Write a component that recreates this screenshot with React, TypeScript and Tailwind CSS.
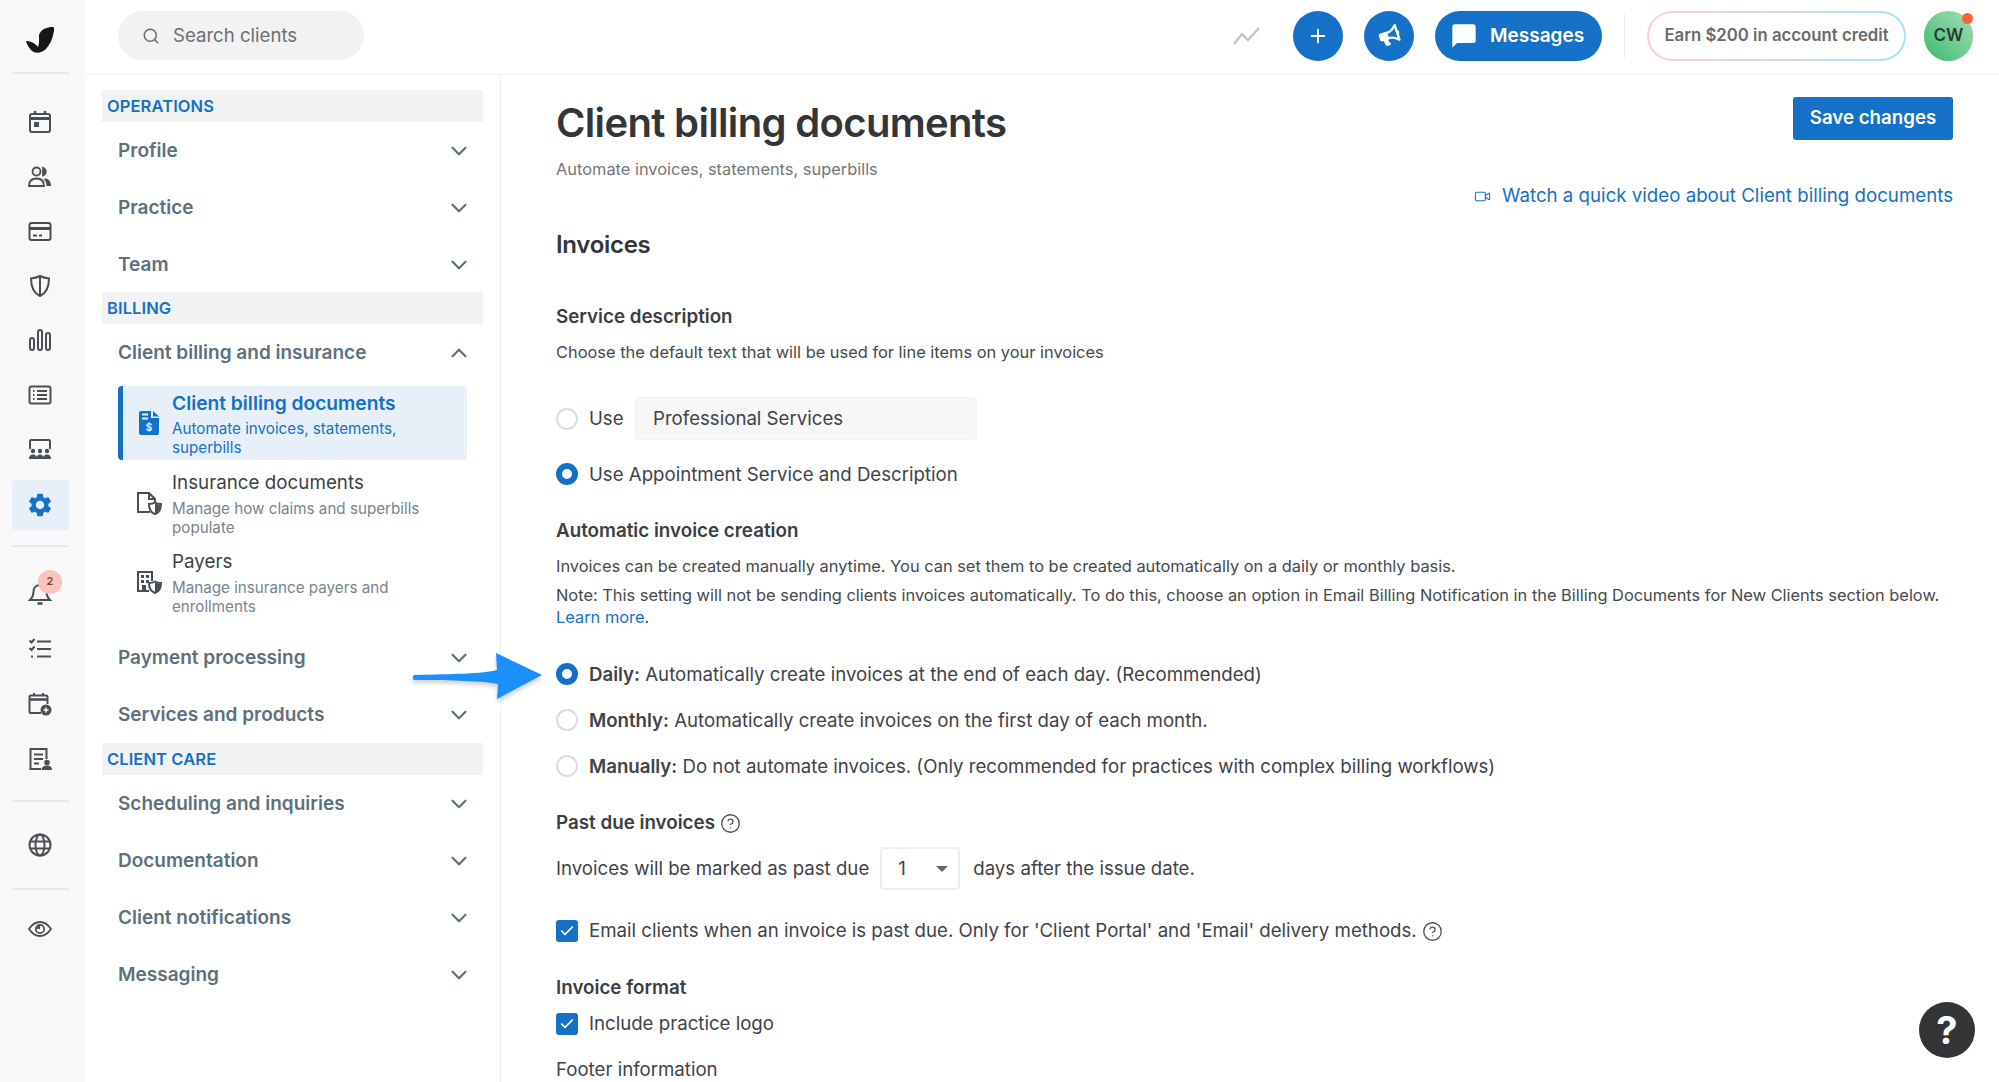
import React from 'react';
import { ChevronDown, ChevronUp, Search, Plus, Video, HelpCircle, Check } from 'lucide-react';
import { MdSettings, MdChatBubble } from 'react-icons/md';
import { FaBullhorn } from 'react-icons/fa';

const Gray = '#4a4f54';

// rail icons, all on a 24 box
const CalendarIcon = () => (
  <svg width="24" height="24" viewBox="0 0 24 24" fill="none" stroke={Gray} strokeWidth="2">
    <rect x="2" y="4" width="20" height="18" rx="2" />
    <path d="M2 8.500h20" strokeWidth="3" />
    <path d="M7 1v4M17 1v4" strokeWidth="2.400" />
    <rect x="6" y="12" width="5" height="5" fill={Gray} stroke="none" />
  </svg>
);
const PeopleIcon = () => (
  <svg width="24" height="24" viewBox="0 0 24 24" fill="none" stroke={Gray} strokeWidth="1.800">
    <circle cx="8.500" cy="6.500" r="4" />
    <path d="M1 21c0-5 3-7.500 7.500-7.500S16 16 16 21z" />
    <path d="M15 2.800a4 4 0 0 1 0 7.600z" fill={Gray} />
    <path d="M17.500 13.500c3.500.5 5.500 3 5.500 7.500h-4.500c0-3-1-5.500-3-7z" fill={Gray} stroke="none" />
  </svg>
);
const CardIcon = () => (
  <svg width="24" height="24" viewBox="0 0 24 24" fill="none" stroke={Gray} strokeWidth="2">
    <rect x="1.500" y="4" width="21" height="17" rx="2" />
    <path d="M1.500 9.500h21" strokeWidth="3" />
    <path d="M5 16.500h4M11 16.500h3" />
  </svg>
);
const ShieldIcon = () => (
  <svg width="24" height="24" viewBox="0 0 24 24" fill="none" stroke={Gray} strokeWidth="2">
    <path d="M12 2c3 1.500 6 2.200 9 2.400 0 9-2.500 14.500-9 17.600C5.500 18.900 3 13.400 3 4.400 6 4.200 9 3.500 12 2z" />
    <path d="M12 2v20" />
  </svg>
);
const BarsIcon = () => (
  <svg width="24" height="24" viewBox="0 0 24 24" fill="none" stroke={Gray} strokeWidth="2">
    <rect x="2" y="10" width="4" height="12" rx="2" />
    <rect x="10" y="2" width="4" height="20" rx="2" />
    <rect x="18" y="5" width="4" height="17" rx="2" />
  </svg>
);
const ListIcon = () => (
  <svg width="24" height="24" viewBox="0 0 24 24" fill="none" stroke={Gray} strokeWidth="2">
    <rect x="1.500" y="3.500" width="21" height="17" rx="2" />
    <path d="M9 8h10M9 12h10M9 16h10M5 8h1.500M5 12h1.500M5 16h1.500" />
  </svg>
);
const GroupIcon = () => (
  <svg width="24" height="24" viewBox="0 0 24 24" fill="none" stroke={Gray} strokeWidth="2">
    <path d="M2 12V4a1 1 0 0 1 1-1h18a1 1 0 0 1 1 1v8" />
    <g fill={Gray} stroke="none">
      <circle cx="5" cy="14" r="2.200" />
      <circle cx="12" cy="14" r="2.200" />
      <circle cx="19" cy="14" r="2.200" />
      <path d="M1 22c0-3 1.500-4.500 4-4.500S9 19 9 22zM8.500 22c0-3 1-4.500 3.500-4.500s3.500 1.500 3.500 4.500zM15 22c0-3 1.500-4.500 4-4.500s4 1.500 4 4.500z" />
    </g>
  </svg>
);
const BellIcon = () => (
  <svg width="24" height="24" viewBox="0 0 24 24" fill="none" stroke={Gray} strokeWidth="2">
    <path d="M12 3c-4 0-6.500 3-6.500 7 0 4-1.500 6-3.500 8h20c-2-2-3.500-4-3.500-8 0-4-2.500-7-6.500-7z" />
    <path d="M9.500 21.500h5" strokeWidth="2.600" />
  </svg>
);
const ChecklistIcon = () => (
  <svg width="24" height="24" viewBox="0 0 24 24" fill="none" stroke={Gray} strokeWidth="2">
    <path d="M9 4.500h14M9 12h14M9 19.500h14" />
    <path d="M1.500 3.500l2 2 3-3.500M1.500 11l2 2 3-3.500" />
    <path d="M3 19.500h2" />
  </svg>
);
const CalendarPlusIcon = () => (
  <svg width="24" height="24" viewBox="0 0 24 24" fill="none" stroke={Gray} strokeWidth="2">
    <path d="M13 21H3a1.500 1.500 0 0 1-1.500-1.500V5A1.500 1.500 0 0 1 3 3.500h15A1.500 1.500 0 0 1 19.500 5v7" />
    <path d="M1.500 7.500h18" strokeWidth="2.600" />
    <path d="M6 1v3M15 1v3" />
    <circle cx="18" cy="18" r="5.500" fill={Gray} stroke="none" />
    <path d="M18 15.500v5M15.500 18h5" stroke="#f8f8f8" strokeWidth="1.500" />
  </svg>
);
const FormIcon = () => (
  <svg width="24" height="24" viewBox="0 0 24 24" fill="none" stroke={Gray} strokeWidth="2">
    <path d="M13 22H2.500V2h16v10" />
    <path d="M6 7.500h9M6 12h9M6 16.500h5" />
    <circle cx="19" cy="15.500" r="2.800" fill={Gray} stroke="none" />
    <path d="M13.500 23c0-3 2-4.500 5.500-4.500s5 1.500 5 4.500z" fill={Gray} stroke="none" />
  </svg>
);
const GlobeIcon = () => (
  <svg width="24" height="24" viewBox="0 0 24 24" fill="none" stroke={Gray} strokeWidth="2">
    <circle cx="12" cy="12" r="10.500" />
    <ellipse cx="12" cy="12" rx="4.500" ry="10.500" />
    <path d="M2 8.500h20M2 15.500h20" />
  </svg>
);
const EyeIcon = () => (
  <svg width="24" height="24" viewBox="0 0 24 24" fill="none" stroke={Gray} strokeWidth="1.800">
    <path d="M1 12c3-4.500 6.500-7 11-7s8 2.500 11 7c-3 4.500-6.500 7-11 7s-8-2.500-11-7z" />
    <circle cx="12" cy="12" r="4.200" />
    <path d="M12 8.500a3.500 3.500 0 0 0-3.500 3.500H12z" fill={Gray} stroke="none" />
  </svg>
);

const Logo = () => (
  <svg width="28" height="26" viewBox="0 0 28 26" fill="#141618">
    <path d="M13 8C15 2 21 0 27 0c2 1 1 4 .5 6-1 6-3.500 12-8 16.500-4 3.500-10 4.500-14 1C3 21 1 18 0 14c4 0 9 2 12 6 1.500-4 1-8 1-12z" />
  </svg>
);

const TrendIcon = () => (
  <svg width="27" height="20" viewBox="0 0 27 20" fill="none" stroke="#c4c4c4" strokeWidth="2.500">
    <path d="M1 18L9 8l6 6L26 2" />
  </svg>
);

const BillingDocIcon = () => (
  <svg width="20" height="24" viewBox="0 0 20 24">
    <path d="M2 0h10v7h8v15a2 2 0 0 1-2 2H2a2 2 0 0 1-2-2V2a2 2 0 0 1 2-2z" fill="#1570c7" />
    <path d="M14 0l6 5.500h-6z" fill="#1570c7" />
    <path d="M3 3.500h6M3 7.500h6" stroke="#e6f0fa" strokeWidth="2" />
    <text x="10" y="20" textAnchor="middle" fontSize="10" fontWeight="700" fill="#e6f0fa" fontFamily="Inter, sans-serif">$</text>
  </svg>
);
const InsuranceDocIcon = () => (
  <svg width="26" height="24" viewBox="0 0 26 24" fill="none" stroke={Gray} strokeWidth="2">
    <path d="M14 21H2V2h11l6 6v3" />
    <path d="M13 2v6h6" />
    <path d="M19 11.500c1.500 1 3.500 1.500 6 1.500 0 5-1.500 8.500-6 10-4.500-1.500-6-5-6-10 2.500 0 4.500-.5 6-1.500z" fill="white" />
    <path d="M19 12c1.500 1 3.500 1.500 5.500 1.500 0 4-1.500 7.500-5.500 9z" fill={Gray} stroke="none" />
  </svg>
);
const PayersIcon = () => (
  <svg width="26" height="24" viewBox="0 0 26 24" fill="none" stroke={Gray} strokeWidth="2">
    <path d="M13 21H2V2h14v9" />
    <g fill={Gray} stroke="none">
      <rect x="5" y="5" width="3" height="3" />
      <rect x="10" y="5" width="3" height="3" />
      <rect x="5" y="10" width="3" height="3" />
      <rect x="10" y="10" width="3" height="3" />
      <rect x="6" y="15" width="4" height="6" />
    </g>
    <path d="M19 11.500c1.500 1 3.500 1.500 6 1.500 0 5-1.500 8.500-6 10-4.500-1.500-6-5-6-10 2.500 0 4.500-.5 6-1.500z" fill="white" />
    <path d="M19 12c1.500 1 3.500 1.500 5.500 1.500 0 4-1.500 7.500-5.500 9z" fill={Gray} stroke="none" />
  </svg>
);

const SectionHeader = ({ label }: { label: string }) => (
  <div className="h-8 bg-[#f1f2f4] pl-[5px] flex items-center text-[16.500px] font-semibold tracking-[0.1px] text-[#1570c7]">
    {label}
  </div>
);

const NavRow = ({ label, open }: { label: string; open?: boolean }) => (
  <div className="h-[57px] pl-4 pr-[11px] flex items-center justify-between text-[19px] font-semibold text-[#5d707d]">
    <span className="pt-[1px]">{label}</span>
    {open ? <ChevronUp size={26} strokeWidth={2} /> : <ChevronDown size={26} strokeWidth={2} />}
  </div>
);

const SubItem = ({ icon, title, lines, active }: { icon: React.ReactNode; title: string; lines: string[]; active?: boolean }) => (
  <div className={`ml-4 mr-4 flex items-center rounded-[4px] ${active ? 'h-[74px] bg-[#e7f0f9] border-l-[5px] border-[#1570c7]' : 'h-[78px] border-l-[5px] border-transparent'}`}>
    <div className="w-[49px] shrink-0 flex justify-center pl-[2px]">{icon}</div>
    <div className="pt-[1px]">
      <div className={`leading-[24px] ${active ? 'text-[19.200px] font-semibold text-[#1570c7]' : 'text-[18.800px] text-[#3c3f43]'}`}>{title}</div>
      <div className="mt-[4px]">
        {lines.map(l => (
          <div key={l} className={`text-[15.200px] leading-[19px] ${active ? 'text-[#1570c7]' : 'text-[#77858f]'}`}>{l}</div>
        ))}
      </div>
    </div>
  </div>
);

const Radio = ({ checked }: { checked?: boolean }) =>
  checked ? (
    <span className="w-[22px] h-[22px] shrink-0 rounded-full border-[6px] border-[#1570c7] bg-white" />
  ) : (
    <span className="w-[22px] h-[22px] shrink-0 rounded-full border-2 border-[#dcdcdc] bg-white" />
  );

const CheckBox = () => (
  <span className="w-[22px] h-[22px] shrink-0 rounded-[3px] bg-[#1570c7] flex items-center justify-center">
    <Check size={16} strokeWidth={2.500} color="white" />
  </span>
);

const Heading = ({ children, className }: { children: React.ReactNode; className: string }) => (
  <div className={`h-[26px] leading-[26px] text-[18.800px] font-semibold text-[#3b3e42] ${className}`}>{children}</div>
);

const OptionRow = ({ className, children }: { className: string; children: React.ReactNode }) => (
  <div className={`h-6 flex items-center gap-[11px] text-[18.650px] text-[#3f4347] ${className}`}>{children}</div>
);

const Help = () => <HelpCircle size={21} strokeWidth={1.500} color="#4a4f54" />;

export default function App() {
  return (
    <div className="relative flex h-[1082px] overflow-hidden bg-white [font-family:Inter,sans-serif]">
      {/* icon rail */}
      <aside className="w-[85px] shrink-0 bg-[#f8f8f8] flex flex-col items-center pr-[5px]">
        <div className="h-[72px] w-full flex items-center justify-center pt-[7px]"><Logo /></div>
        <div className="w-[57px] h-[2px] bg-[#e8e8e8]" />
        <div className="mt-[21px] flex flex-col items-center">
          {[CalendarIcon, PeopleIcon, CardIcon, ShieldIcon, BarsIcon, ListIcon, GroupIcon].map((Icon, i) => (
            <div key={i} className="h-[54.500px] flex items-center justify-center"><Icon /></div>
          ))}
        </div>
        <div className="mt-[3px] w-[57px] h-[50px] rounded-[4px] bg-[#e7f0f9] flex items-center justify-center">
          <MdSettings size={28} color="#1570c7" />
        </div>
        <div className="mt-[15px] w-[57px] h-[2px] bg-[#e8e8e8]" />
        <div className="mt-[20px] flex flex-col items-center">
          <div className="relative h-[55px] flex items-center justify-center">
            <BellIcon />
            <span className="absolute left-[10px] top-[3px] w-6 h-6 rounded-full bg-[#fbc3bb] text-[#8a3a30] text-[11px] font-semibold flex items-center justify-center">2</span>
          </div>
          {[ChecklistIcon, CalendarPlusIcon, FormIcon].map((Icon, i) => (
            <div key={i} className="h-[55px] flex items-center justify-center"><Icon /></div>
          ))}
        </div>
        <div className="mt-[13px] w-[57px] h-[2px] bg-[#e8e8e8]" />
        <div className="h-[86px] flex items-center"><GlobeIcon /></div>
        <div className="w-[57px] h-[2px] bg-[#e8e8e8]" />
        <div className="h-[78px] flex items-center"><EyeIcon /></div>
      </aside>

      <div className="flex-1 flex flex-col min-w-0">
        {/* top bar */}
        <header className="h-[75px] shrink-0 border-b border-[#efefef] flex items-center pl-[33px] pr-[26px] pb-[3px]">
          <div className="w-[246px] h-[49px] rounded-full bg-[#f2f2f2] flex items-center pl-[24px] gap-[13px] text-[18.600px] text-[#6e6e6e]">
            <Search size={18} color="#6e6e6e" />
            <span className="pt-[1px]">Search clients</span>
          </div>
          <div className="ml-auto flex items-center">
            <TrendIcon />
            <button className="ml-[33px] w-[50px] h-[50px] rounded-full bg-[#1570c7] flex items-center justify-center">
              <Plus size={22} color="white" />
            </button>
            <button className="ml-[21px] w-[50px] h-[50px] rounded-full bg-[#1570c7] flex items-center justify-center">
              <FaBullhorn size={21} color="white" className="-rotate-[18deg]" />
            </button>
            <button className="ml-[21px] w-[167px] h-[50px] rounded-full bg-[#1570c7] flex items-center pl-[15px] gap-[12px] text-white text-[19px] font-semibold">
              <MdChatBubble size={28} color="white" />
              <span className="pt-[1px]">Messages</span>
            </button>
            <div className="ml-[22px] w-px h-11 bg-[#ececec]" />
            <div className="ml-[22px] w-[259px] h-[50px] rounded-full p-[2px] bg-gradient-to-r from-[#fbd0d2] via-[#d8d8e2] to-[#a3e2f6]">
              <div className="w-full h-full rounded-full bg-white flex items-center justify-center text-[16.750px] font-semibold text-[#6a6a6a]">
                Earn $200 in account credit
              </div>
            </div>
            <div className="relative ml-[18px] w-[49px] h-[50px] rounded-full bg-gradient-to-tr from-[#2cbb6f] to-[#a3dcb6] flex items-center justify-center text-[17px] font-semibold text-[#2c3a33]">
              CW
              <span className="absolute right-0 top-[2px] w-[11px] h-[11px] rounded-full bg-[#f4663a]" />
            </div>
          </div>
        </header>

        <div className="flex-1 flex min-h-0">
          {/* settings nav */}
          <nav className="w-[416px] shrink-0 border-r border-[#f0f0f0] pt-[15px] pl-[17px] pr-[17px]">
            <SectionHeader label="OPERATIONS" />
            <NavRow label="Profile" />
            <NavRow label="Practice" />
            <NavRow label="Team" />
            <div className="-mt-[1px]"><SectionHeader label="BILLING" /></div>
            <NavRow label="Client billing and insurance" open />
            <div className="mt-[5px]">
              <SubItem active icon={<BillingDocIcon />} title="Client billing documents" lines={['Automate invoices, statements,', 'superbills']} />
              <div className="mt-[4px]">
                <SubItem icon={<InsuranceDocIcon />} title="Insurance documents" lines={['Manage how claims and superbills', 'populate']} />
              </div>
              <div className="mt-[1px]">
                <SubItem icon={<PayersIcon />} title="Payers" lines={['Manage insurance payers and', 'enrollments']} />
              </div>
            </div>
            <div className="mt-[8px]">
              <NavRow label="Payment processing" />
              <NavRow label="Services and products" />
            </div>
            <SectionHeader label="CLIENT CARE" />
            <NavRow label="Scheduling and inquiries" />
            <NavRow label="Documentation" />
            <NavRow label="Client notifications" />
            <NavRow label="Messaging" />
          </nav>

          {/* main form */}
          <main className="flex-1 min-w-0 pt-[21px] pl-[55px] pr-[46px] overflow-hidden">
            <div className="h-[51px] flex items-start justify-between">
              <h1 className="mt-[3px] h-12 leading-[48px] text-[40px] font-semibold tracking-[-0.660px] text-[#333538]">Client billing documents</h1>
              <button className="mt-[1px] w-[160px] h-[43px] rounded-[3px] bg-[#1570c7] text-white text-[18.700px] font-semibold">Save changes</button>
            </div>
            <p className="mt-[10px] h-6 leading-6 text-[16.400px] text-[#757575]">Automate invoices, statements, superbills</p>
            <div className="mt-[3px] h-6 flex items-center justify-end gap-[11px] text-[18.700px] text-[#1570c7]">
              <Video size={17} strokeWidth={1.500} />
              <span>Watch a quick video about Client billing documents</span>
            </div>
            <h2 className="mt-[21px] h-8 leading-8 text-[24px] font-semibold tracking-[-0.3px] text-[#333538]">Invoices</h2>
            <Heading className="mt-[43px]">Service description</Heading>
            <p className="mt-[10px] h-6 leading-6 text-[16.400px] text-[#45494d]">Choose the default text that will be used for line items on your invoices</p>
            <div className="mt-[33px] h-[43px] flex items-center text-[18.650px] text-[#3f4347]">
              <Radio />
              <span className="ml-[11px] w-[46px]">Use</span>
              <div className="w-[342px] h-[43px] rounded-[4px] bg-[#f7f7f7] border border-[#f2f2f2] flex items-center pl-[17px]">Professional Services</div>
            </div>
            <OptionRow className="mt-[22px]"><Radio checked /><span className="pt-[2px]">Use Appointment Service and Description</span></OptionRow>
            <Heading className="mt-[32px]">Automatic invoice creation</Heading>
            <p className="mt-[10px] h-6 leading-6 text-[16.400px] text-[#45494d]">Invoices can be created manually anytime. You can set them to be created automatically on a daily or monthly basis.</p>
            <p className="mt-[6px] leading-[22px] text-[16.400px] text-[#45494d]">
              Note: This setting will not be sending clients invoices automatically. To do this, choose an option in Email Billing Notification in the Billing Documents for New Clients section below.
              <br />
              <span className="text-[#1570c7]">Learn more</span>.
            </p>
            <OptionRow className="mt-[34px]"><Radio checked /><span className="pt-[2px]"><b className="font-semibold">Daily:</b> Automatically create invoices at the end of each day. (Recommended)</span></OptionRow>
            <OptionRow className="mt-[22px]"><Radio /><span className="pt-[2px]"><b className="font-semibold">Monthly:</b> Automatically create invoices on the first day of each month.</span></OptionRow>
            <OptionRow className="mt-[22px]"><Radio /><span className="pt-[2px]"><b className="font-semibold">Manually:</b> Do not automate invoices. (Only recommended for practices with complex billing workflows)</span></OptionRow>
            <Heading className="mt-[32px] flex items-center gap-[5px]">Past due invoices <Help /></Heading>
            <div className="mt-[11px] h-[43px] flex items-center text-[18.650px] text-[#3f4347]">
              <span>Invoices will be marked as past due</span>
              <div className="ml-[11px] w-[80px] h-[43px] rounded-[4px] border-2 border-[#ededed] flex items-center justify-between pl-[16px] pr-[10px]">
                1
                <span className="w-0 h-0 border-x-[6px] border-x-transparent border-t-[6px] border-t-[#666]" />
              </div>
              <span className="ml-[13px]">days after the issue date.</span>
            </div>
            <OptionRow className="mt-[29px]">
              <CheckBox />
              <span>Email clients when an invoice is past due. Only for 'Client Portal' and 'Email' delivery methods.</span>
              <span className="-ml-[6px]"><Help /></span>
            </OptionRow>
            <Heading className="mt-[32px]">Invoice format</Heading>
            <OptionRow className="mt-[11px]"><CheckBox />Include practice logo</OptionRow>
            <OptionRow className="mt-[22px] gap-0">Footer information</OptionRow>
          </main>
        </div>
      </div>

      {/* annotation arrow */}
      <svg className="absolute left-[413px] top-[650px] drop-shadow-[0_3px_2px_rgba(0,0,0,0.2)]" width="132" height="54" viewBox="0 0 132 54">
        <path d="M2 25C40 24 70 24 84 20 L83 3 L129 25 L84 49 L85 34 C70 31 40 30 2 30a2.500 2.500 0 0 1 0-5z" fill="#1b8ffb" />
      </svg>

      <button className="absolute left-[1919px] top-[1002px] w-14 h-14 rounded-full bg-[#333436] text-white text-[38px] font-bold flex items-center justify-center">?</button>
    </div>
  );
}
